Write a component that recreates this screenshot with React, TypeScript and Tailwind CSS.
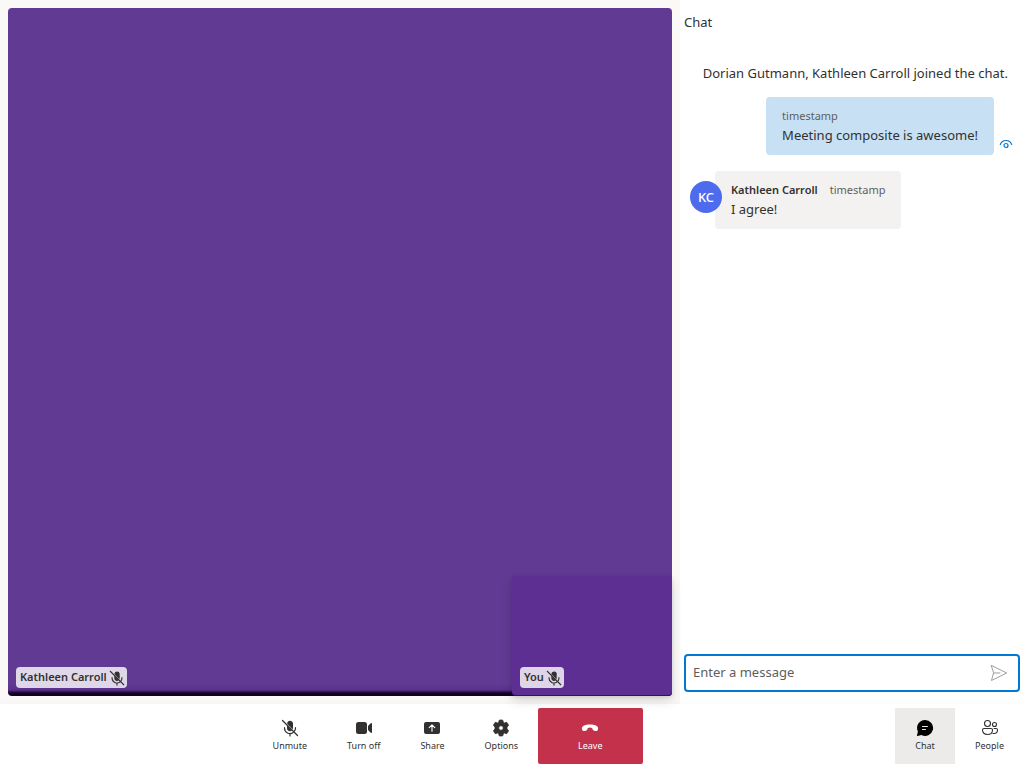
import type { ReactNode } from "react";

function MicOffIcon({ className }: { className?: string }) {
  return (
    <svg viewBox="0 0 20 20" className={className} fill="none" aria-hidden="true">
      <path d="M7.300 4.500a3 3 0 0 1 5.700.5v5c0 .5-.1.900-.3 1.300L7.300 5.900z" fill="currentColor" />
      <path d="M7 7.500 12 12.500A3 3 0 0 1 7 10.200z" fill="currentColor" />
      <path d="M4.500 9.500v.5a5.500 5.500 0 0 0 8.700 4.500M15.500 9.500v.5c0 1.200-.4 2.300-1 3.200M10 15.500V18" stroke="currentColor" strokeWidth="1.200" strokeLinecap="round" />
      <path d="m2.500 2.500 15 15" stroke="currentColor" strokeWidth="1.200" strokeLinecap="round" />
    </svg>
  );
}

function VideoIcon() {
  return (
    <svg viewBox="0 0 20 20" className="size-5" fill="currentColor" aria-hidden="true">
      <path d="M4.500 4A2.500 2.500 0 0 0 2 6.500v7A2.500 2.500 0 0 0 4.500 16h6a2.500 2.500 0 0 0 2.500-2.500v-7A2.500 2.500 0 0 0 10.500 4zM14 7.900v4.200l2.700 2.700c.5.400 1.300.1 1.300-.6V5.800c0-.7-.8-1-1.300-.6z" />
    </svg>
  );
}

function ShareIcon() {
  return (
    <svg viewBox="0 0 20 20" className="size-5" fill="none" aria-hidden="true">
      <rect x="2" y="4" width="16" height="12" rx="2" fill="currentColor" />
      <path d="M10 13.300V7M7.200 9.600 10 6.800l2.800 2.800" stroke="#fff" strokeWidth="1.100" strokeLinecap="round" strokeLinejoin="round" />
    </svg>
  );
}

function GearIcon() {
  return (
    <svg viewBox="0 0 20 20" className="size-5" aria-hidden="true">
      <path
        fill="currentColor"
        fillRule="evenodd"
        d="M8.200 2.200a8 8 0 0 1 3.600 0l.5 2.100 1.200.7 2.200-.7a8 8 0 0 1 1.800 3.100L16 9v2l1.500 1.600a8 8 0 0 1-1.800 3.100l-2.200-.7-1.200.7-.5 2.100a8 8 0 0 1-3.600 0l-.5-2.100-1.200-.7-2.200.7a8 8 0 0 1-1.800-3.100L4 11V9L2.500 7.400a8 8 0 0 1 1.800-3.100l2.200.7 1.200-.7zM10 7.700a2.300 2.300 0 1 0 0 4.600 2.300 2.300 0 0 0 0-4.600z"
        stroke="currentColor"
        strokeWidth=".8"
        strokeLinejoin="round"
      />
    </svg>
  );
}

function HangUpIcon() {
  return (
    <svg viewBox="0 0 20 20" className="size-5" fill="currentColor" aria-hidden="true">
      <path d="m18 10.900-.2.900c-.2.800-1 1.300-1.900 1.200l-1.700-.2c-.7-.1-1.300-.5-1.500-1.200l-.6-1.700a6.800 6.800 0 0 0-4.200 0l-.6 1.700c-.2.700-.8 1.100-1.500 1.200l-1.700.2c-.9.100-1.700-.4-1.900-1.200L2 10.900c-.2-.9 0-1.800.7-2.400C4.300 7.100 6.700 6.500 10 6.500s5.700.6 7.300 2c.7.600.9 1.500.7 2.400z" />
    </svg>
  );
}

function ChatIcon() {
  return (
    <svg viewBox="0 0 20 20" className="size-5" fill="none" aria-hidden="true">
      <path d="M10 2a8 8 0 1 1-3.600 15.100l-3.800.9a.5.500 0 0 1-.6-.6l.9-3.800A8 8 0 0 1 10 2z" fill="#000" />
      <path d="M7.500 8.500h5M7.500 11.500h3" stroke="#ecebea" strokeWidth="1.100" strokeLinecap="round" />
    </svg>
  );
}

function PeopleIcon() {
  return (
    <svg viewBox="0 0 20 20" className="size-5" fill="none" stroke="currentColor" strokeWidth="1.100" strokeLinecap="round" aria-hidden="true">
      <circle cx="7.500" cy="5.500" r="3" />
      <circle cx="14.500" cy="6.500" r="2" />
      <path d="M4 10.500h7a1.500 1.500 0 0 1 1.500 1.500c0 2.700-1.900 4.500-5 4.500s-5-1.800-5-4.500A1.500 1.500 0 0 1 4 10.500zM14 10.500h2a1.500 1.500 0 0 1 1.500 1.500c0 2-1.300 3.500-3.500 3.500-.4 0-.8 0-1.100-.1" />
    </svg>
  );
}

function SendIcon() {
  return (
    <svg viewBox="0 0 20 20" className="size-5" fill="none" stroke="currentColor" strokeWidth="1" strokeLinejoin="round" strokeLinecap="round" aria-hidden="true">
      <path d="M2.500 2.500 17.700 10 2.500 17.500 4.500 10zM4.500 10H11" />
    </svg>
  );
}

function SeenIcon() {
  return (
    <svg viewBox="0 0 16 16" className="size-4" fill="none" stroke="currentColor" strokeWidth="1.200" strokeLinecap="round" role="img" aria-label="Seen">
      <path d="M2.300 8.500C3.200 6 5.300 4.500 8 4.500s4.800 1.500 5.700 4" />
      <circle cx="8" cy="9.500" r="2" />
    </svg>
  );
}

type BarButtonProps = { label: string; icon: ReactNode; className?: string };

function BarButton({ label, icon, className = "px-5 text-[#323130]" }: BarButtonProps) {
  return (
    <button type="button" className={`flex h-14 flex-col items-center justify-center text-[9px] leading-4 ${className}`}>
      {icon}
      <span>{label}</span>
    </button>
  );
}

function NameTag({ name }: { name: string }) {
  return (
    <div className="flex h-[21px] items-center gap-px rounded bg-white/80 pr-px pl-1 text-[11px] font-semibold text-[#323130]">
      <span>{name}</span>
      <MicOffIcon className="size-[18px]" />
    </div>
  );
}

export default function App() {
  return (
    <div className="flex h-screen flex-col bg-white font-['Noto_Sans','Open_Sans',sans-serif] text-[13px] text-[#323130]">
      <div className="flex min-h-0 flex-1">
        <main className="flex min-w-0 flex-1 bg-[#faf9f8] p-2">
          <section aria-label="Kathleen Carroll" className="relative flex flex-1 items-end rounded bg-[linear-gradient(to_top,#0c001c_0,#16002c_3px,#59318b_6px,#613a93_12px,#613a93_100%)] p-2">
            <NameTag name="Kathleen Carroll" />
            <section aria-label="You" className="absolute right-0 bottom-0 flex h-30 w-40 items-end rounded border-b border-[#2f1263] bg-[#5e2f92] px-2 pb-[7px] shadow-[0_1px_4px_rgba(0,0,0,0.12),0_5px_12px_rgba(0,0,0,0.12)]">
              <NameTag name="You" />
            </section>
          </section>
        </main>

        <aside className="flex w-[344px] flex-col px-1 pb-3">
          <h1 className="pt-3 leading-5">Chat</h1>
          <div className="flex flex-1 flex-col pt-[31px]">
            <p className="px-3 text-right leading-5 whitespace-nowrap">Dorian Gutmann, Kathleen Carroll joined the chat.</p>
            <div className="mt-3.5 flex items-end justify-end gap-1 pr-1.5">
              <article className="rounded bg-[#c7e0f4] px-4 py-2.5">
                <time className="block text-[11px] leading-[18px] text-[#605e5c]">timestamp</time>
                <p className="leading-5 whitespace-nowrap">Meeting composite is awesome!</p>
              </article>
              <span className="pb-[3px] text-[#0078d4]">
                <SeenIcon />
              </span>
            </div>
            <div className="mt-4 flex items-start pl-1.5">
              <div className="z-10 mt-2.5 -mr-[7px] flex size-8 items-center justify-center rounded-full bg-[#4f6bed] font-medium leading-none text-white">KC</div>
              <article className="rounded bg-[#f3f2f1] px-4 py-2.5">
                <header className="flex gap-3 text-[11px] leading-[18px] whitespace-nowrap">
                  <span className="font-semibold">Kathleen Carroll</span>
                  <time className="text-[#605e5c]">timestamp</time>
                </header>
                <p className="leading-5">I agree!</p>
              </article>
            </div>
          </div>
          <form className="flex h-[38px] items-center rounded border-2 border-[#0078d4] pr-[9px] pl-[7px]" onSubmit={(event) => event.preventDefault()}>
            <input type="text" aria-label="Enter a message" placeholder="Enter a message" className="min-w-0 flex-1 bg-transparent outline-none placeholder:text-[#605e5c]" />
            <button type="submit" aria-label="Send message" className="text-[#a19f9d]">
              <SendIcon />
            </button>
          </form>
        </aside>
      </div>

      <footer className="flex h-16 items-center shadow-[0_0_8px_rgba(0,0,0,0.03)]">
        <div className="flex flex-1 justify-center">
          <BarButton label="Unmute" icon={<MicOffIcon className="size-5" />} />
          <BarButton label="Turn off" icon={<VideoIcon />} />
          <BarButton label="Share" icon={<ShareIcon />} />
          <BarButton label="Options" icon={<GearIcon />} />
          <BarButton label="Leave" icon={<HangUpIcon />} className="rounded-xs bg-[#c4314b] px-10 text-white" />
        </div>
        <div className="flex">
          <BarButton label="Chat" icon={<ChatIcon />} className="bg-[#ecebea] px-5 text-[#323130]" />
          <BarButton label="People" icon={<PeopleIcon />} />
        </div>
      </footer>
    </div>
  );
}
